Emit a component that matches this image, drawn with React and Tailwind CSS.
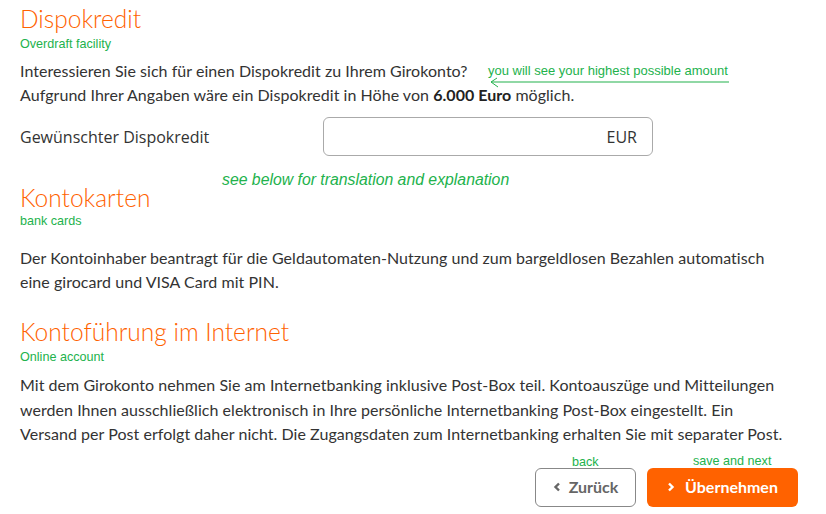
import React from "react";

const body = { fontFamily: "Lato, 'Noto Sans', sans-serif" };

export default function App() {
  return (
    <div className="relative w-[826px] h-[514px] bg-white overflow-hidden text-[#333333]" style={body}>
      <div className="pl-5 pt-[5px]">
        <h2 className="text-[24.5px] leading-[28px] font-light text-[#ff6200]">Dispokredit</h2>
        <div className="mt-[3px] text-[12.6px] leading-[16px] text-[#22b24c] font-['Liberation_Sans',Arial,sans-serif]">Overdraft facility</div>
        <p className="mt-[7px] text-[16px] leading-[23.5px] tracking-[0.04px] whitespace-nowrap">
          Interessieren Sie sich für einen Dispokredit zu Ihrem Girokonto?
          <br />
          Aufgrund Ihrer Angaben wäre ein Dispokredit in Höhe von <b className="font-bold text-[#222]">6.000 Euro</b> möglich.
        </p>
        <div className="mt-[11px] flex items-center">
          <span className="w-[303px] text-[16px] font-['Open_Sans',sans-serif] text-[#333]">Gewünschter Dispokredit</span>
          <div className="w-[330px] h-[39px] rounded-[6px] border border-[#aaaaaa] flex items-center justify-end pr-[15px] text-[16px] font-['Open_Sans',sans-serif] text-[#333]">EUR</div>
        </div>

        <h2 className="mt-[28px] text-[24.5px] leading-[28px] font-light text-[#ff6200]">Kontokarten</h2>
        <div className="mt-[1px] text-[12.6px] leading-[16px] text-[#22b24c] font-['Liberation_Sans',Arial,sans-serif]">bank cards</div>
        <p className="mt-[17px] text-[16px] leading-[24px] tracking-[0.04px] whitespace-nowrap">
          Der Kontoinhaber beantragt für die Geldautomaten-Nutzung und zum bargeldlosen Bezahlen automatisch
          <br />
          eine girocard und VISA Card mit PIN.
        </p>

        <h2 className="mt-[24px] text-[24.5px] leading-[28px] font-light text-[#ff6200]">Kontoführung im Internet</h2>
        <div className="mt-[3px] text-[12.6px] leading-[16px] text-[#22b24c] font-['Liberation_Sans',Arial,sans-serif]">Online account</div>
        <p className="mt-[8px] text-[16px] leading-[24.5px] tracking-[0.04px] whitespace-nowrap">
          Mit dem Girokonto nehmen Sie am Internetbanking inklusive Post-Box teil. Kontoauszüge und Mitteilungen
          <br />
          werden Ihnen ausschließlich elektronisch in Ihre persönliche Internetbanking Post-Box eingestellt. Ein
          <br />
          Versand per Post erfolgt daher nicht. Die Zugangsdaten zum Internetbanking erhalten Sie mit separater Post.
        </p>

        <div className="mt-[21px] flex justify-end gap-[11px] pr-[28px]">
          <div className="relative w-[101px] h-[39px] rounded-[6px] border border-[#888888] flex items-center justify-center gap-[8px] text-[16px] font-bold text-[#666666]">
            <svg width="8" height="10" viewBox="0 0 8 10"><path d="M6 1.5 L2.5 5 L6 8.5" stroke="#666" strokeWidth="2.4" fill="none" /></svg>
            Zurück
            <span className="absolute left-[36px] top-[-14px] text-[12.6px] leading-[14px] font-normal text-[#22b24c] font-['Liberation_Sans',Arial,sans-serif]">back</span>
          </div>
          <div className="relative w-[151px] h-[39px] rounded-[6px] bg-[#ff6200] flex items-center justify-center gap-[10px] text-[16px] font-bold text-white">
            <svg width="8" height="10" viewBox="0 0 8 10"><path d="M2 1.5 L5.5 5 L2 8.5" stroke="#fff" strokeWidth="2.4" fill="none" /></svg>
            Übernehmen
            <span className="absolute left-[46px] top-[-14px] text-[12.6px] leading-[14px] font-normal text-[#22b24c] font-['Liberation_Sans',Arial,sans-serif]">save and next</span>
          </div>
        </div>
      </div>

      <div className="absolute left-[488px] top-[64px] text-[13px] leading-[14px] text-[#22b24c] font-['Liberation_Sans',Arial,sans-serif]">you will see your highest possible amount</div>
      <svg className="absolute left-[488px] top-[76px]" width="244" height="14" viewBox="0 0 244 14">
        <path d="M3 6 L241 6" stroke="#22b24c" strokeWidth="1.2" />
        <path d="M9 2 L3 6 L10 11" stroke="#22b24c" strokeWidth="1" fill="none" />
      </svg>
      <div className="absolute left-[222px] top-[171px] text-[15.8px] leading-[18px] italic text-[#22b24c] font-['Liberation_Sans',Arial,sans-serif]">see below for translation and explanation</div>
    </div>
  );
}
